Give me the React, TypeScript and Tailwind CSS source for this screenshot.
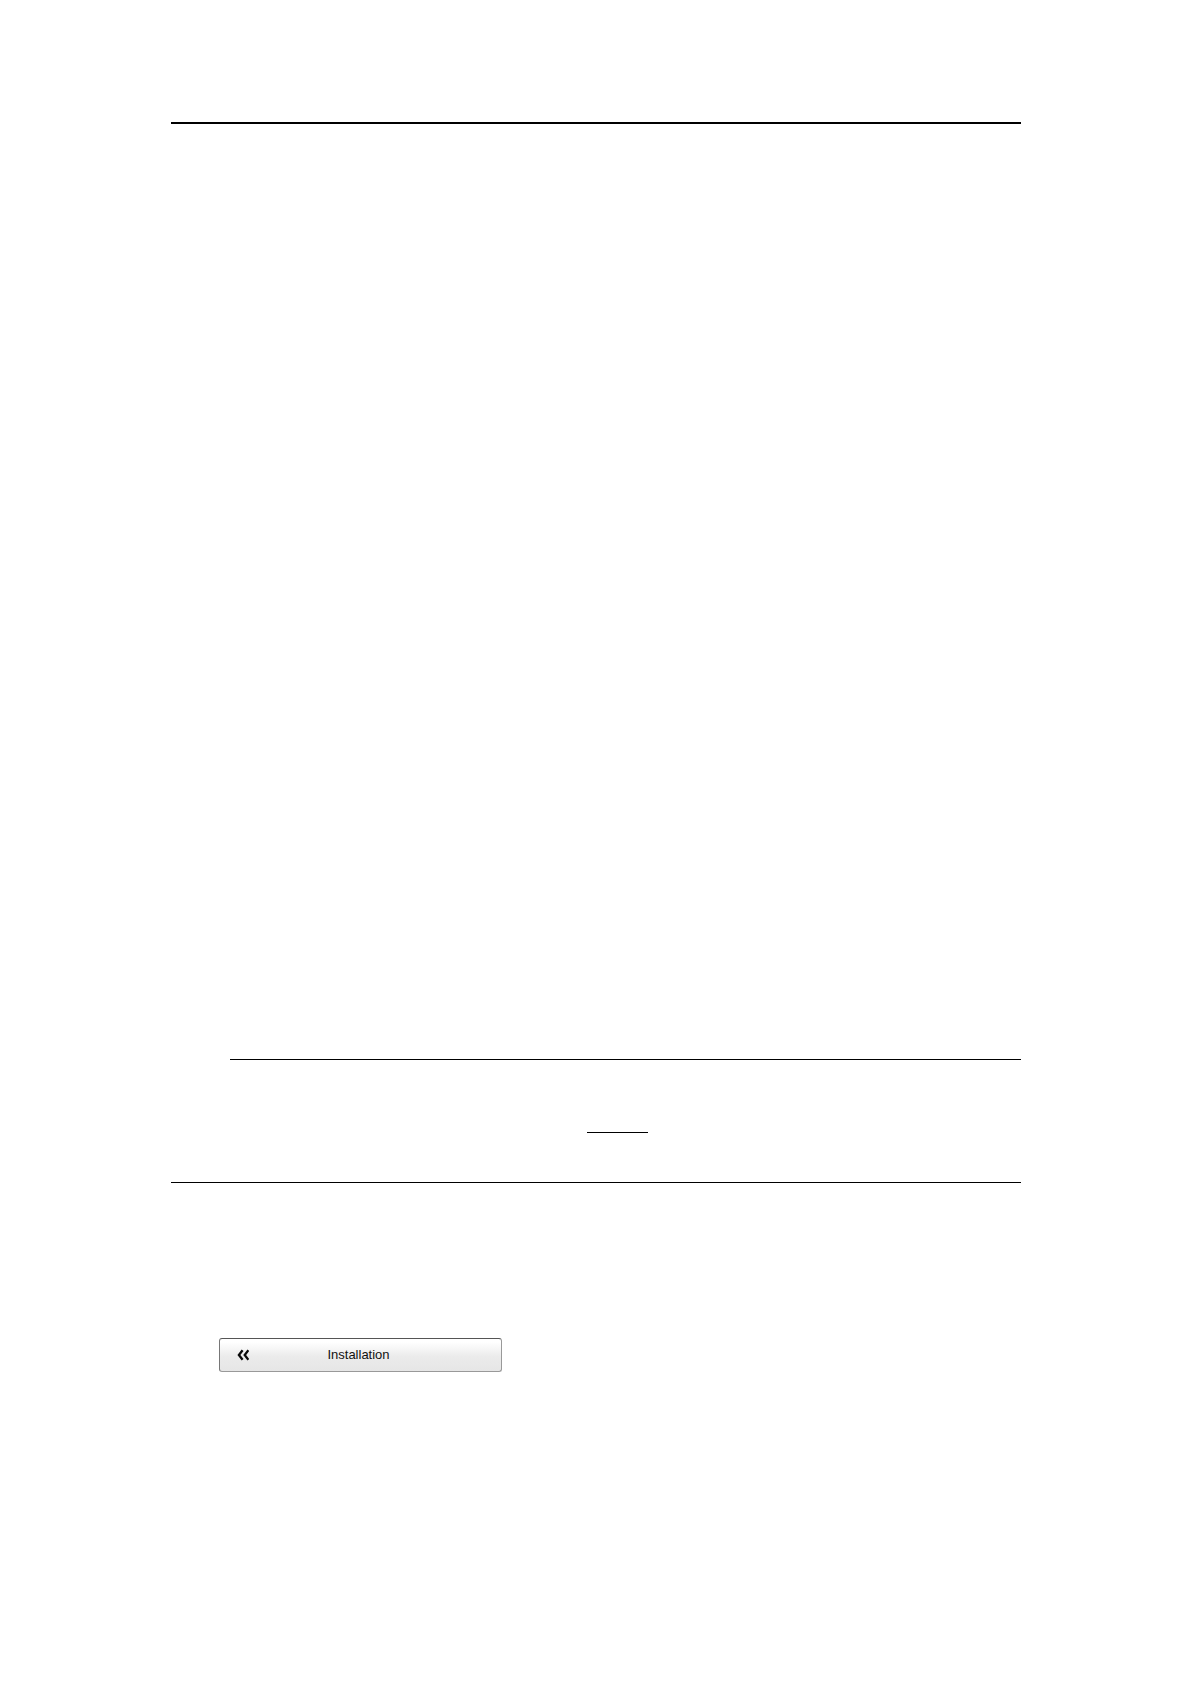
type BackButtonProps = {
  className?: string;
  label: string;
};

const BackButton = ({ className = "", label }: BackButtonProps) => {
  return (
    <button
      type="button"
      className={`cursor-pointer flex flex-row items-center h-[34px] w-full max-w-[283px] px-[17px] rounded-[3px] border border-[#999] border-t-[#555] border-l-[#777] bg-linear-to-b from-white from-10% via-[#ebebeb] via-55% to-[#e6e6e6] ${className}`}
    >
      <svg
        className="h-3 w-3 shrink-0"
        viewBox="0 0 12 12"
        fill="none"
        stroke="#0a0a0a"
        strokeWidth="2.3"
        aria-hidden="true"
      >
        <path d="M5.6 1.2L1.9 6L5.6 10.8" />
        <path d="M11.4 1.2L7.7 6L11.4 10.8" />
      </svg>
      <span className="flex-1 pr-4 text-center text-[13px] leading-4 text-[#111]">
        {label}
      </span>
    </button>
  );
};

export default function App() {
  return (
    <main className="min-h-screen bg-white pt-[122px] pr-[170px] pb-20 pl-[171px] font-['Liberation_Sans',Arial,sans-serif]">
      <hr className="border-0 h-0.5 bg-black" />
      <section className="pt-[935px]">
        <hr className="ml-[59px] border-0 h-px bg-black" />
        <hr className="mt-[72px] ml-[416px] w-[61px] border-0 h-px bg-black" />
        <hr className="mt-[49px] border-0 h-px bg-black" />
      </section>
      <section className="pt-[155px] pl-12">
        <BackButton label="Installation" />
      </section>
    </main>
  );
}
